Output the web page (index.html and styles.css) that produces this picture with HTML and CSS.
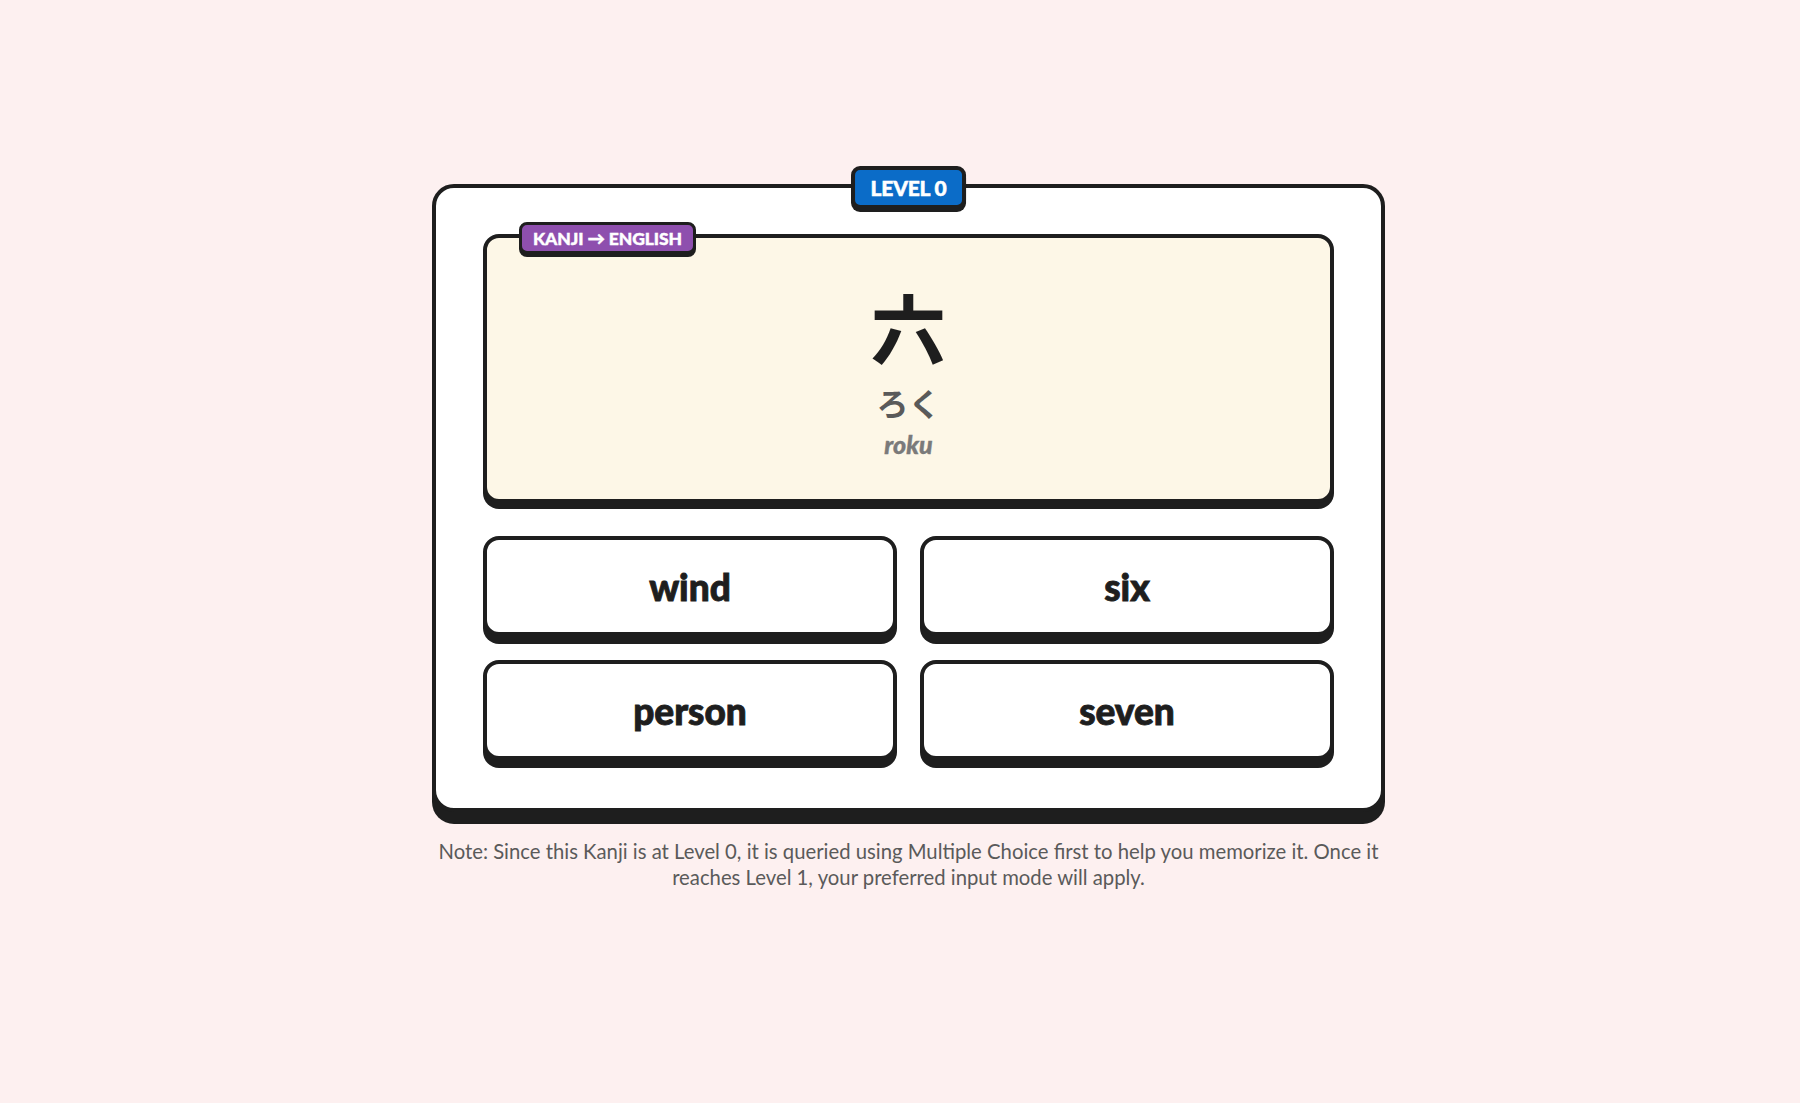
FILE: index.html
```html
<!DOCTYPE html>
<html lang="en">
<head>
<meta charset="utf-8">
<title>Kanji Quiz</title>
<link rel="stylesheet" href="styles.css">
</head>
<body>
<main class="page">
  <section class="quiz">
    <div class="card">
      <div class="level-badge">LEVEL 0</div>
      <div class="prompt">
        <div class="mode-badge">KANJI → ENGLISH</div>
        <div class="kanji">六</div>
        <div class="kana">ろく</div>
        <div class="romaji">roku</div>
      </div>
      <div class="choices">
        <button class="choice">wind</button>
        <button class="choice">six</button>
        <button class="choice">person</button>
        <button class="choice">seven</button>
      </div>
    </div>
    <p class="note">Note: Since this Kanji is at Level 0, it is queried using Multiple Choice first to help you memorize it. Once it reaches Level 1, your preferred input mode will apply.</p>
  </section>
</main>
</body>
</html>
```
FILE: styles.css
```css
* { box-sizing: border-box; }
html, body { margin: 0; padding: 0; }
body {
  background: #fdf0f0;
  font-family: Lato, "Noto Sans", "Noto Sans CJK JP", sans-serif;
  color: #1e1e1e;
  min-height: 1103px;
}
.page {
  display: flex;
  justify-content: center;
  padding: 184px 0 0 17px;
}
.quiz {
  width: 953px;
  display: flex;
  flex-direction: column;
}
.card {
  position: relative;
  background: #ffffff;
  border: 4px solid #1e1e1e;
  border-radius: 22px;
  box-shadow: 0 12px 0 #1e1e1e;
  padding: 46px 47px 48px;
}
.level-badge {
  position: absolute;
  top: -22px;
  left: 50%;
  transform: translateX(-50%);
  height: 43px;
  padding: 0 16px;
  display: flex;
  align-items: center;
  background: #0b6cc8;
  color: #fff;
  border: 4px solid #1e1e1e;
  border-radius: 9px;
  box-shadow: 0 3px 0 #1e1e1e;
  font-weight: 900;
  font-size: 21px;
  letter-spacing: -0.2px;
  -webkit-text-stroke: 0.5px #fff;
  white-space: nowrap;
}
.prompt {
  position: relative;
  height: 269px;
  background: #fdf7e7;
  border: 4px solid #1e1e1e;
  border-radius: 16px;
  box-shadow: 0 6px 0 #1e1e1e;
  padding-top: 50px;
  display: flex;
  flex-direction: column;
  align-items: center;
}
.mode-badge {
  position: absolute;
  top: -16px;
  left: 32px;
  height: 32px;
  padding: 0 11px;
  display: flex;
  align-items: center;
  background: #8e4fae;
  color: #fff;
  border: 3px solid #1e1e1e;
  border-radius: 8px;
  box-shadow: 0 3px 0 #1e1e1e;
  font-weight: 900;
  font-size: 17.5px;
  letter-spacing: -0.1px;
  -webkit-text-stroke: 0.4px #fff;
  white-space: nowrap;
}
.kanji {
  font-family: "Noto Sans CJK JP", sans-serif;
  font-weight: 700;
  font-size: 76px;
  line-height: 76px;
  color: #1e1e1e;
}
.kana {
  margin-top: 22px;
  font-family: "Noto Sans CJK JP", sans-serif;
  font-weight: 700;
  font-size: 32px;
  line-height: 32px;
  color: #5a5a5a;
}
.romaji {
  margin-top: 14px;
  font-style: italic;
  font-weight: 900;
  font-size: 25px;
  line-height: 25px;
  color: #7a7a7a;
  -webkit-text-stroke: 0.4px #7a7a7a;
}
.choices {
  margin-top: 33px;
  display: grid;
  grid-template-columns: 1fr 1fr;
  gap: 24px 23px;
}
.choice {
  height: 100px;
  background: #fff;
  border: 4px solid #1e1e1e;
  border-radius: 16px;
  box-shadow: 0 8px 0 #1e1e1e;
  font-family: Lato, "Noto Sans", sans-serif;
  font-weight: 900;
  font-size: 37px;
  color: #1e1e1e;
  -webkit-text-stroke: 0.9px #1e1e1e;
  display: flex;
  align-items: center;
  justify-content: center;
  padding: 0;
  cursor: pointer;
}
.note {
  margin: 26px 0 0;
  text-align: center;
  font-size: 20.3px;
  line-height: 26px;
  color: #5a5a5a;
}
```
